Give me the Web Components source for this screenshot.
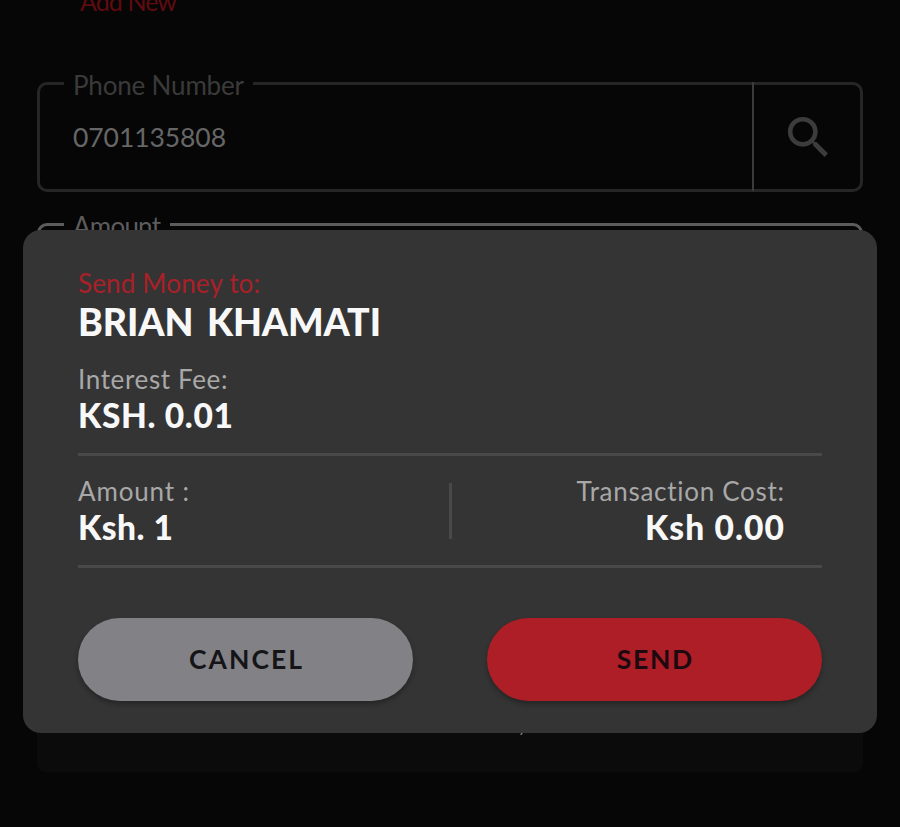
<!DOCTYPE html>
<html lang="en"><head><meta charset="utf-8"><title>Send Money</title>
<style>
html,body{margin:0;height:827px;overflow:hidden;background:#060606}
body{font-family:Lato,"Open Sans",sans-serif}
</style></head><body>
<send-page></send-page>
<script>
const make=(name,html,init)=>customElements.define(name,class extends HTMLElement{
  constructor(){super();this.attachShadow({mode:'open'}).innerHTML=html}
  connectedCallback(){if(init)init(this,this.shadowRoot)}
});

// A single line of text tracked out to a given measure.
make('tracked-text',`<style>:host{display:block;white-space:pre;width:max-content}span{display:inline-block}</style><span><slot></slot></span>`,
(el,root)=>{
  const s=root.querySelector('span'),w=+el.getAttribute('width'),n=el.textContent.length;
  const gap=(w-s.getBoundingClientRect().width)/(n-1);
  s.style.letterSpacing=gap+'px';s.style.marginRight=-gap+'px';
});

make('search-icon',`<style>:host{display:block;width:55px;height:55px;color:#3c3c3c}svg{display:block}</style>
<svg width="55" height="55" viewBox="0 0 24 24" fill="currentColor"><path d="M15.5 14h-.79l-.28-.27A6.471 6.471 0 0 0 16 9.5 6.5 6.5 0 1 0 9.5 16c1.61 0 3.09-.59 4.23-1.57l.27.28v.79l5 4.99L20.49 19l-4.99-5zm-6 0C7.01 14 5 11.99 5 9.5S7.01 5 9.5 5 14 7.01 14 9.5 11.99 14 9.5 14z"/></svg>`);

make('outlined-field',`<style>
:host{display:block;box-sizing:border-box;height:110px;--line:#262626;--label:#3a3a3a}
fieldset{box-sizing:border-box;margin:0;height:100%;min-width:0;border:3px solid var(--line);border-radius:10px;padding:0 0 0 33px;display:block}
legend{margin-left:-9px;padding:0 9px;height:3px;line-height:7px;font-size:26px;color:var(--label)}
.row{display:flex;height:100%}
.value{flex:1}
</style><fieldset><legend><slot name="label"></slot></legend><div class="row"><div class="value"><slot></slot></div><slot name="action"></slot></div></fieldset>`);

make('field-action',`<style>:host{display:block;box-sizing:border-box;width:108px;height:109px;margin-top:-3px;border-left:2px solid #3b3b3b;padding:28px 0 0 27px}</style><slot></slot>`);

make('pill-button',`<style>
:host{display:block}
button{width:100%;height:83px;border:0;border-radius:42px;background:var(--fill);color:var(--ink);font:700 26.5px/83px Lato,sans-serif;padding:0;display:flex;justify-content:center;box-shadow:0 3px 5px rgba(0,0,0,.3)}
</style><button><slot></slot></button>`);

make('detail-item',`<style>
:host{display:block}
.l{font-size:26px;line-height:32px;color:var(--label,#a8a8a8)}
.v{font-size:33.5px;line-height:40px;font-weight:900;color:#f8f8f8}
:host([end]) div{display:flex;justify-content:flex-end}
:host([lead]) .v{font-size:37.5px;line-height:46px;word-spacing:5px}
</style><div class="l"><slot name="label"></slot></div><div class="v"><slot></slot></div>`);

make('confirm-dialog',`<style>
:host{position:absolute;left:23px;top:230px;width:854px;height:503px;box-sizing:border-box;border-radius:18px;background:#343434;padding:37px 55px 0}
.fee{margin-top:18px}
.pair{box-sizing:border-box;height:115px;margin-top:18px;border:solid #494949;border-width:3px 0;display:grid;grid-template-columns:371px 3px 1fr}
.pair i{background:#494949;height:56px;margin-top:27px}
.a{padding-top:18.5px}.b{padding:18.5px 38px 0 0}
.buttons{display:grid;grid-template-columns:1fr 1fr;gap:74px;margin-top:50px}
</style>
<slot name="to"></slot><div class="fee"><slot name="fee"></slot></div>
<div class="pair"><div class="a"><slot name="amount"></slot></div><i></i><div class="b"><slot name="cost"></slot></div></div>
<div class="buttons"><slot name="actions"></slot></div>`);

make('send-page',`<style>
:host{display:block;position:relative;width:900px;height:827px;background:#060606;overflow:hidden}
.form{padding:0 37px;display:flex;flex-direction:column}
.add{height:82px;padding-left:43px;font-size:25px;line-height:32px;color:#600b10;box-sizing:border-box}
.add tracked-text{margin-top:-15px}
.phone{padding-top:36px;font-size:26.5px;line-height:32px;color:#666}
.amount{margin-top:31px;--line:#5c5c5c;--label:#5c5c5c}
.card{margin-top:339px;height:100px;border-radius:8px;background:#0b0b0b;color:#999;font-size:24px;line-height:102px;padding-left:482px}
</style>
<div class="form">
 <div class="add"><tracked-text width="97">Add New</tracked-text></div>
 <outlined-field><tracked-text slot="label" width="171">Phone Number</tracked-text><div class="phone"><tracked-text width="153">0701135808</tracked-text></div><field-action slot="action"><search-icon></search-icon></field-action></outlined-field>
 <outlined-field class="amount"><tracked-text slot="label" width="88">Amount</tracked-text></outlined-field>
 <div class="card">,</div>
</div>
<confirm-dialog>
 <detail-item slot="to" lead style="--label:#aa2029"><tracked-text slot="label" width="182">Send Money to:</tracked-text><tracked-text width="303">BRIAN KHAMATI</tracked-text></detail-item>
 <detail-item slot="fee"><tracked-text slot="label" width="149.5">Interest Fee:</tracked-text><tracked-text width="155">KSH. 0.01</tracked-text></detail-item>
 <detail-item slot="amount"><tracked-text slot="label" width="111">Amount :</tracked-text><tracked-text width="95">Ksh. 1</tracked-text></detail-item>
 <detail-item slot="cost" end><tracked-text slot="label" width="208">Transaction Cost:</tracked-text><tracked-text width="139">Ksh 0.00</tracked-text></detail-item>
 <pill-button slot="actions" style="--fill:#828186;--ink:#151518"><tracked-text width="113">CANCEL</tracked-text></pill-button>
 <pill-button slot="actions" style="--fill:#ad1e26;--ink:#1c0a10"><tracked-text width="75.5">SEND</tracked-text></pill-button>
</confirm-dialog>`);
</script></body></html>
